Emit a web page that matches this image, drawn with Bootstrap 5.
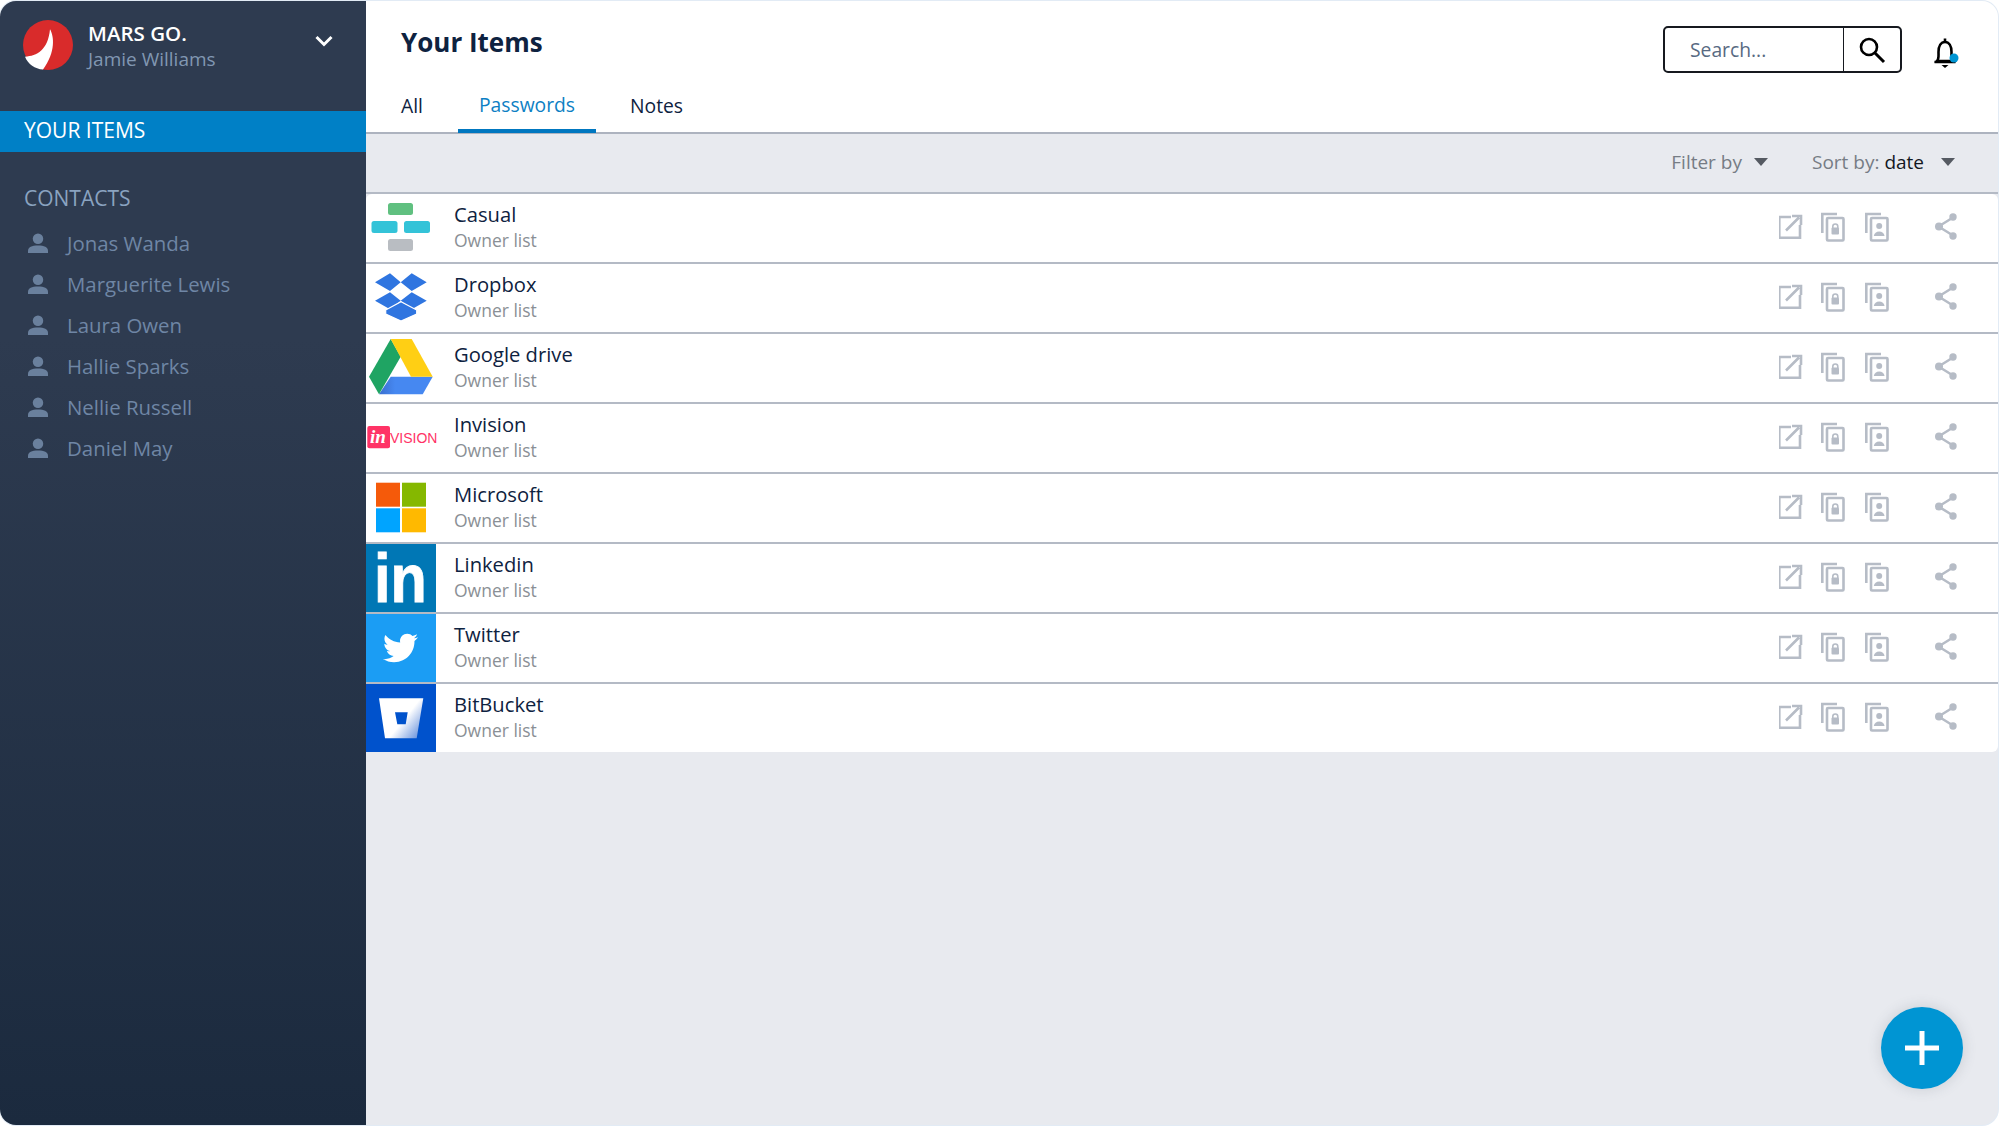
<!DOCTYPE html>
<html lang="en">
<head>
<meta charset="utf-8">
<title>Your Items</title>
<link rel="stylesheet" href="https://cdn.jsdelivr.net/npm/bootstrap@5.3.0/dist/css/bootstrap.min.css">
<style>
html,body{height:100%;}
body{background:#fff;font-family:"Open Sans",sans-serif;overflow:hidden;}
.shell{width:1998px;height:1124px;background:#e8eaef;border-radius:16px;position:relative;overflow:hidden;box-shadow:0 0 0 1px #e2ebf5;margin-top:1px;}
.side{width:366px;flex:none;background:linear-gradient(180deg,#2e3b50 0%,#2e3b50 30%,#1b2a3e 100%);}
.brand{height:110px;padding:19px 33px 0 23px;}
.brand-name{font-size:20.5px;font-weight:600;color:#fff;line-height:24px;margin-top:1px;}
.brand-user{font-size:19px;color:#8197b2;line-height:26px;margin-top:1px;}
.brand-logo{width:50px;height:50px;margin-right:15px;}
.chev{margin-top:15px;}
.active-item{height:41px;background:#0080c6;color:#fff;font-size:21px;line-height:38px;padding-left:24px;font-weight:500;}
.side-head{font-size:21px;color:#8aa3c0;padding-left:24px;margin-top:33px;line-height:26px;font-weight:500;}
.people{margin-top:12px;}
.people-item{height:41px;padding:0 0 0 28px;color:#6f86a5;font-size:20.4px;background:transparent;border:0;}
.people-item svg{margin-right:19px;}
.head{height:133px;background:#fff;border-bottom:2px solid #adb3bf;position:relative;}
.title{font-size:26px;font-weight:700;color:#0e2240;margin:0;line-height:36px;padding:23px 0 0 35px;}
.tabs{border:0;padding-left:35px;margin-top:23px;}
.tabs .nav-link{border:0;border-radius:0;color:#0e2240;font-size:19.3px;padding:0 35px 0 0;height:50px;line-height:46px;background:none;}
.tabs .nav-link.active{color:#0d7fc4;padding:0 21px;height:50px;line-height:43px;border-bottom:4px solid #0077c0;background:none;}
.tabs .nav-item+.nav-item+.nav-item .nav-link{padding-left:34px;}
.searchbox{width:240px;height:47px;position:absolute;top:25px;left:1297px;}
.searchbox .form-control{border:2px solid #16191f;border-right:1px solid #16191f;border-radius:5px 0 0 5px;font-size:19.3px;padding:0 0 0 25px;height:47px;width:181px;flex:none;color:#586a82;box-shadow:none;}
.searchbox .form-control::placeholder{color:#586a82;opacity:1;}
.searchbox .btn{border:2px solid #16191f;border-left:1px solid #16191f;border-radius:0 5px 5px 0;height:47px;padding:0;width:59px;background:#fff;}
.bell{position:absolute;top:36px;left:1566px;}
.toolbar{height:60px;border-bottom:2px solid #b4bac5;padding:0 43px 2px 0;font-size:19px;color:#767c85;}
.tool-btn{background:none;border:0;color:#767c85;font-size:19px;padding:0;}
.tool-btn strong{font-weight:400;color:#14181f;}
.tool-btn::after{display:inline-block;margin-left:12px;vertical-align:3px;border-top:8px solid #555a62;border-right:7.5px solid transparent;border-left:7.5px solid transparent;border-bottom:0;}
.tool-btn+.tool-btn{margin-left:44px;}
.tool-btn+.tool-btn::after{margin-left:17px;}
.item-row{height:70px;padding:0;background:#fff;border:0;border-bottom:2px solid #b4bac5;margin:0;}
.item-row:last-child{border-bottom:0;height:68px;}
.thumb{width:70px;height:68px;flex:none;display:block;overflow:visible;}
.txt{padding:0 0 4px 18px;flex:1;}
.item-name{font-size:20.2px;color:#0e2240;line-height:26px;}
.item-sub{font-size:17.5px;color:#8a8f95;line-height:22px;margin-top:2px;}
.acts{padding:0 39px 2px 0;}
.acts svg{display:block;}
.fab{position:absolute;left:1881px;top:1006px;width:82px;height:82px;border-radius:50%;background:#0095d3;border:0;padding:0;box-shadow:0 0 14px rgba(60,70,90,.18);}
.main{min-width:0;}
</style>
</head>
<body>
<div class="shell d-flex">
  <aside class="side d-flex flex-column">
    <div class="brand d-flex align-items-start">
      <svg class="brand-logo" viewBox="0 0 50 50"><circle cx="25" cy="25" r="25" fill="#d92b2b"/><path d="M27 9.300C31 16 33 32 20 49.500 12 49 5 44 2 36.700 14 36 25 30 27 9.300Z" fill="#fff"/></svg>
      <div class="flex-grow-1">
        <div class="brand-name">MARS GO.</div>
        <div class="brand-user">Jamie Williams</div>
      </div>
      <svg class="chev" width="18" height="12" viewBox="0 0 18 12"><path d="M1.500 2 9 9.500 16.500 2" fill="none" stroke="#fff" stroke-width="3"/></svg>
    </div>
    <div class="active-item">YOUR ITEMS</div>
    <div class="side-head">CONTACTS</div>
    <div class="list-group people">
      <div class="list-group-item people-item d-flex align-items-center"><svg width="20" height="21" viewBox="0 0 21 21"><use href="#p"/></svg>Jonas Wanda</div>
      <div class="list-group-item people-item d-flex align-items-center"><svg width="20" height="21" viewBox="0 0 21 21"><use href="#p"/></svg>Marguerite Lewis</div>
      <div class="list-group-item people-item d-flex align-items-center"><svg width="20" height="21" viewBox="0 0 21 21"><use href="#p"/></svg>Laura Owen</div>
      <div class="list-group-item people-item d-flex align-items-center"><svg width="20" height="21" viewBox="0 0 21 21"><use href="#p"/></svg>Hallie Sparks</div>
      <div class="list-group-item people-item d-flex align-items-center"><svg width="20" height="21" viewBox="0 0 21 21"><use href="#p"/></svg>Nellie Russell</div>
      <div class="list-group-item people-item d-flex align-items-center"><svg width="20" height="21" viewBox="0 0 21 21"><use href="#p"/></svg>Daniel May</div>
    </div>
  </aside>
  <main class="main flex-grow-1">
    <header class="head">
      <h1 class="title">Your Items</h1>
      <ul class="nav tabs">
        <li class="nav-item"><a class="nav-link" href="#">All</a></li>
        <li class="nav-item"><a class="nav-link active" href="#">Passwords</a></li>
        <li class="nav-item"><a class="nav-link" href="#">Notes</a></li>
      </ul>
      <div class="input-group searchbox flex-nowrap">
        <input class="form-control" type="text" placeholder="Search...">
        <button class="btn" type="button" aria-label="Search"><svg width="28" height="28" viewBox="0 0 28 28"><circle cx="11" cy="11" r="8" fill="none" stroke="#000" stroke-width="2.600"/><path d="M17 17 26 26" stroke="#000" stroke-width="3"/></svg></button>
      </div>
      <svg class="bell" width="30" height="34" viewBox="0 0 30 34"><path d="M13 1.500v3.500M5 24c2-2 1.500-4 1.500-9C6.500 9 9 5 13 5s6.500 4 6.500 10c0 5 -.5 7 1.500 9Z M2.500 25h21" fill="none" stroke="#000" stroke-width="2.600"/><path d="M9.500 28h7l-3.500 3Z" fill="#000"/><circle cx="22" cy="21" r="4.500" fill="#0095d3"/></svg>
    </header>
    <div class="toolbar d-flex align-items-center justify-content-end">
      <button class="tool-btn dropdown-toggle" type="button">Filter by</button>
      <button class="tool-btn dropdown-toggle" type="button">Sort by: <strong>date</strong></button>
    </div>
    <div class="list-group">
      <div class="list-group-item item-row d-flex align-items-center">
        <svg class="thumb" viewBox="0 0 70 68"><rect x="22" y="9" width="25" height="12" rx="2.500" fill="#60c080"/><rect x="5.500" y="27" width="26" height="12" rx="2.500" fill="#34c3d8"/><rect x="38" y="27" width="26" height="12" rx="2.500" fill="#34c3d8"/><rect x="22" y="45" width="25" height="12" rx="2.500" fill="#b9bdc2"/></svg>
        <div class="txt"><div class="item-name">Casual</div><div class="item-sub">Owner list</div></div>
        <div class="acts"><svg width="180" height="30"><use href="#a"/></svg></div>
      </div>
      <div class="list-group-item item-row d-flex align-items-center">
        <svg class="thumb" viewBox="0 1 70 68" fill="#2f75e0"><path d="M24 10.300 9 19.300 24 28 34.700 19.300ZM45.700 10.300 34.700 19.300 45.700 28 60.700 19.300ZM9 37.700 24 29.300 34.700 37.700 24 46.300ZM60.700 37.700 45.700 29.300 34.700 37.700 45.700 46.300Z"/><path d="M19.700 47 35 38.700 50.700 47V51L35 58 19.700 51Z" stroke="#fff" stroke-width="1.200"/></svg>
        <div class="txt"><div class="item-name">Dropbox</div><div class="item-sub">Owner list</div></div>
        <div class="acts"><svg width="180" height="30"><use href="#a"/></svg></div>
      </div>
      <div class="list-group-item item-row d-flex align-items-center">
        <svg class="thumb" viewBox="0 1 70 68"><defs><linearGradient id="dr"><stop offset="0" stop-color="#3a6fcf"/><stop offset=".3" stop-color="#4688f1"/></linearGradient></defs><path d="M24.700 43.700H66.700L56.700 61.300H13Z" fill="url(#dr)"/><path d="M24.700 6 3 43.700 13 61.300 34.700 23.700Z" fill="#1fa463"/><path d="M24.700 6H45.700L66.700 43.700H45Z" fill="#ffcf14"/></svg>
        <div class="txt"><div class="item-name">Google drive</div><div class="item-sub">Owner list</div></div>
        <div class="acts"><svg width="180" height="30"><use href="#a"/></svg></div>
      </div>
      <div class="list-group-item item-row d-flex align-items-center">
        <svg class="thumb" viewBox="0 1 70 68"><rect x="1.300" y="23" width="22.700" height="22.300" rx="2" fill="#ff3366"/><text x="4" y="40" font-family="Liberation Serif,serif" font-style="italic" font-weight="700" font-size="19" fill="#fff">in</text><text x="24" y="40" font-family="Liberation Sans,sans-serif" font-size="14" fill="#ff3366">VISION</text></svg>
        <div class="txt"><div class="item-name">Invision</div><div class="item-sub">Owner list</div></div>
        <div class="acts"><svg width="180" height="30"><use href="#a"/></svg></div>
      </div>
      <div class="list-group-item item-row d-flex align-items-center">
        <svg class="thumb" viewBox="0 1 70 68"><rect x="10" y="9.700" width="24" height="24" fill="#f55a0a"/><rect x="36" y="9.700" width="24" height="24" fill="#85b800"/><rect x="10" y="35.300" width="24" height="24" fill="#00a4ff"/><rect x="36" y="35.300" width="24" height="24" fill="#ffb900"/></svg>
        <div class="txt"><div class="item-name">Microsoft</div><div class="item-sub">Owner list</div></div>
        <div class="acts"><svg width="180" height="30"><use href="#a"/></svg></div>
      </div>
      <div class="list-group-item item-row d-flex align-items-center">
        <svg class="thumb" viewBox="0 1 70 68"><rect y="1" width="70" height="68" fill="#0077b5"/><text transform="translate(8 59.300) scale(.9 1.050)" font-family="Liberation Sans,sans-serif" font-weight="700" font-size="66" fill="#fff" stroke="#fff" stroke-width=".8">in</text></svg>
        <div class="txt"><div class="item-name">Linkedin</div><div class="item-sub">Owner list</div></div>
        <div class="acts"><svg width="180" height="30"><use href="#a"/></svg></div>
      </div>
      <div class="list-group-item item-row d-flex align-items-center">
        <svg class="thumb" viewBox="0 1 70 68"><rect y="1" width="70" height="68" fill="#1b9df4"/><path transform="translate(17 17.500) scale(1.460)" fill="#fff" d="M23.954 4.569c-.885.389-1.830.654-2.825.775 1.014-.611 1.794-1.574 2.163-2.723-.951.555-2.005.959-3.127 1.184-.896-.959-2.173-1.559-3.591-1.559-2.717 0-4.920 2.203-4.920 4.917 0 .390.045.765.127 1.124C7.691 8.094 4.066 6.130 1.640 3.161c-.427.722-.666 1.561-.666 2.475 0 1.710.870 3.213 2.188 4.096-.807-.026-1.566-.248-2.228-.616v.061c0 2.385 1.693 4.374 3.946 4.827-.413.111-.849.171-1.296.171-.314 0-.615-.030-.916-.086.631 1.953 2.445 3.377 4.604 3.417-1.680 1.319-3.809 2.105-6.102 2.105-.390 0-.779-.023-1.170-.067 2.189 1.394 4.768 2.209 7.557 2.209 9.054 0 13.999-7.496 13.999-13.986 0-.209 0-.420-.015-.630.961-.689 1.800-1.560 2.460-2.548l-.047-.020z"/></svg>
        <div class="txt"><div class="item-name">Twitter</div><div class="item-sub">Owner list</div></div>
        <div class="acts"><svg width="180" height="30"><use href="#a"/></svg></div>
      </div>
      <div class="list-group-item item-row d-flex align-items-center">
        <svg class="thumb" viewBox="0 1 70 68"><rect y="1" width="70" height="68" fill="#0052cc"/><defs><linearGradient id="bb" x1="0.300" y1="0.300" x2="1" y2="0.800"><stop offset="0.400" stop-color="#fff"/><stop offset="1" stop-color="#6f97de"/></linearGradient></defs><path fill-rule="evenodd" fill="url(#bb)" d="M13 15.300H57.300L50.700 55.300H19ZM29 29.300 31.300 41.300H39.700L41.700 29.300Z"/></svg>
        <div class="txt"><div class="item-name">BitBucket</div><div class="item-sub">Owner list</div></div>
        <div class="acts"><svg width="180" height="30"><use href="#a"/></svg></div>
      </div>
    </div>
    <button class="fab d-flex align-items-center justify-content-center" type="button" aria-label="Add"><svg width="36" height="36" viewBox="0 0 36 36"><path d="M18 1v34M1 18h34" stroke="#fff" stroke-width="5"/></svg></button>
  </main>
</div>
<svg width="0" height="0" class="d-block" aria-hidden="true">
  <defs>
    <g id="p"><circle cx="10.500" cy="5.500" r="5.500" fill="#6a809d"/><path d="M0 20.500v-2.500c0-3.500 4-5.500 10.500-5.500S21 14.500 21 18v2.500Z" fill="#6a809d"/></g>
    <g id="a" fill="none" stroke="#b6bcc6" stroke-width="2.600">
      <path d="M13 4H1.300v20.700H22V12M8 17.500 21 4.500M14 3H23V12" transform="translate(-1 1)"/>
      <g transform="translate(42 0)"><path d="M1.300 21V2H16"/><rect x="6" y="6" width="16.500" height="22.500" rx="1"/><rect x="10.500" y="15.500" width="7.500" height="7" rx="1" fill="#b6bcc6" stroke="none"/><path d="M11.800 16v-1.500a2.500 2.500 0 0 1 5 0V16" stroke-width="1.600"/></g>
      <g transform="translate(86 0)"><path d="M1.300 21V2H16"/><rect x="6" y="6" width="16.500" height="22.500" rx="1"/><circle cx="14.200" cy="14" r="3" fill="#b6bcc6" stroke="none"/><path d="M8.800 24c.500-3 2.500-4.500 5.400-4.500s4.900 1.500 5.400 4.500Z" fill="#b6bcc6" stroke="none"/></g>
      <g transform="translate(156 1)"><path d="M3.500 13.500 18 4.500M3.500 13.500 18 22.500"/><circle cx="4" cy="13.500" r="4" fill="#b6bcc6" stroke="none"/><circle cx="18" cy="4" r="3.700" fill="#b6bcc6" stroke="none"/><circle cx="18" cy="23" r="3.700" fill="#b6bcc6" stroke="none"/></g>
    </g>
  </defs>
</svg>
<script src="https://cdn.jsdelivr.net/npm/bootstrap@5.3.0/dist/js/bootstrap.bundle.min.js"></script>
</body>
</html>
